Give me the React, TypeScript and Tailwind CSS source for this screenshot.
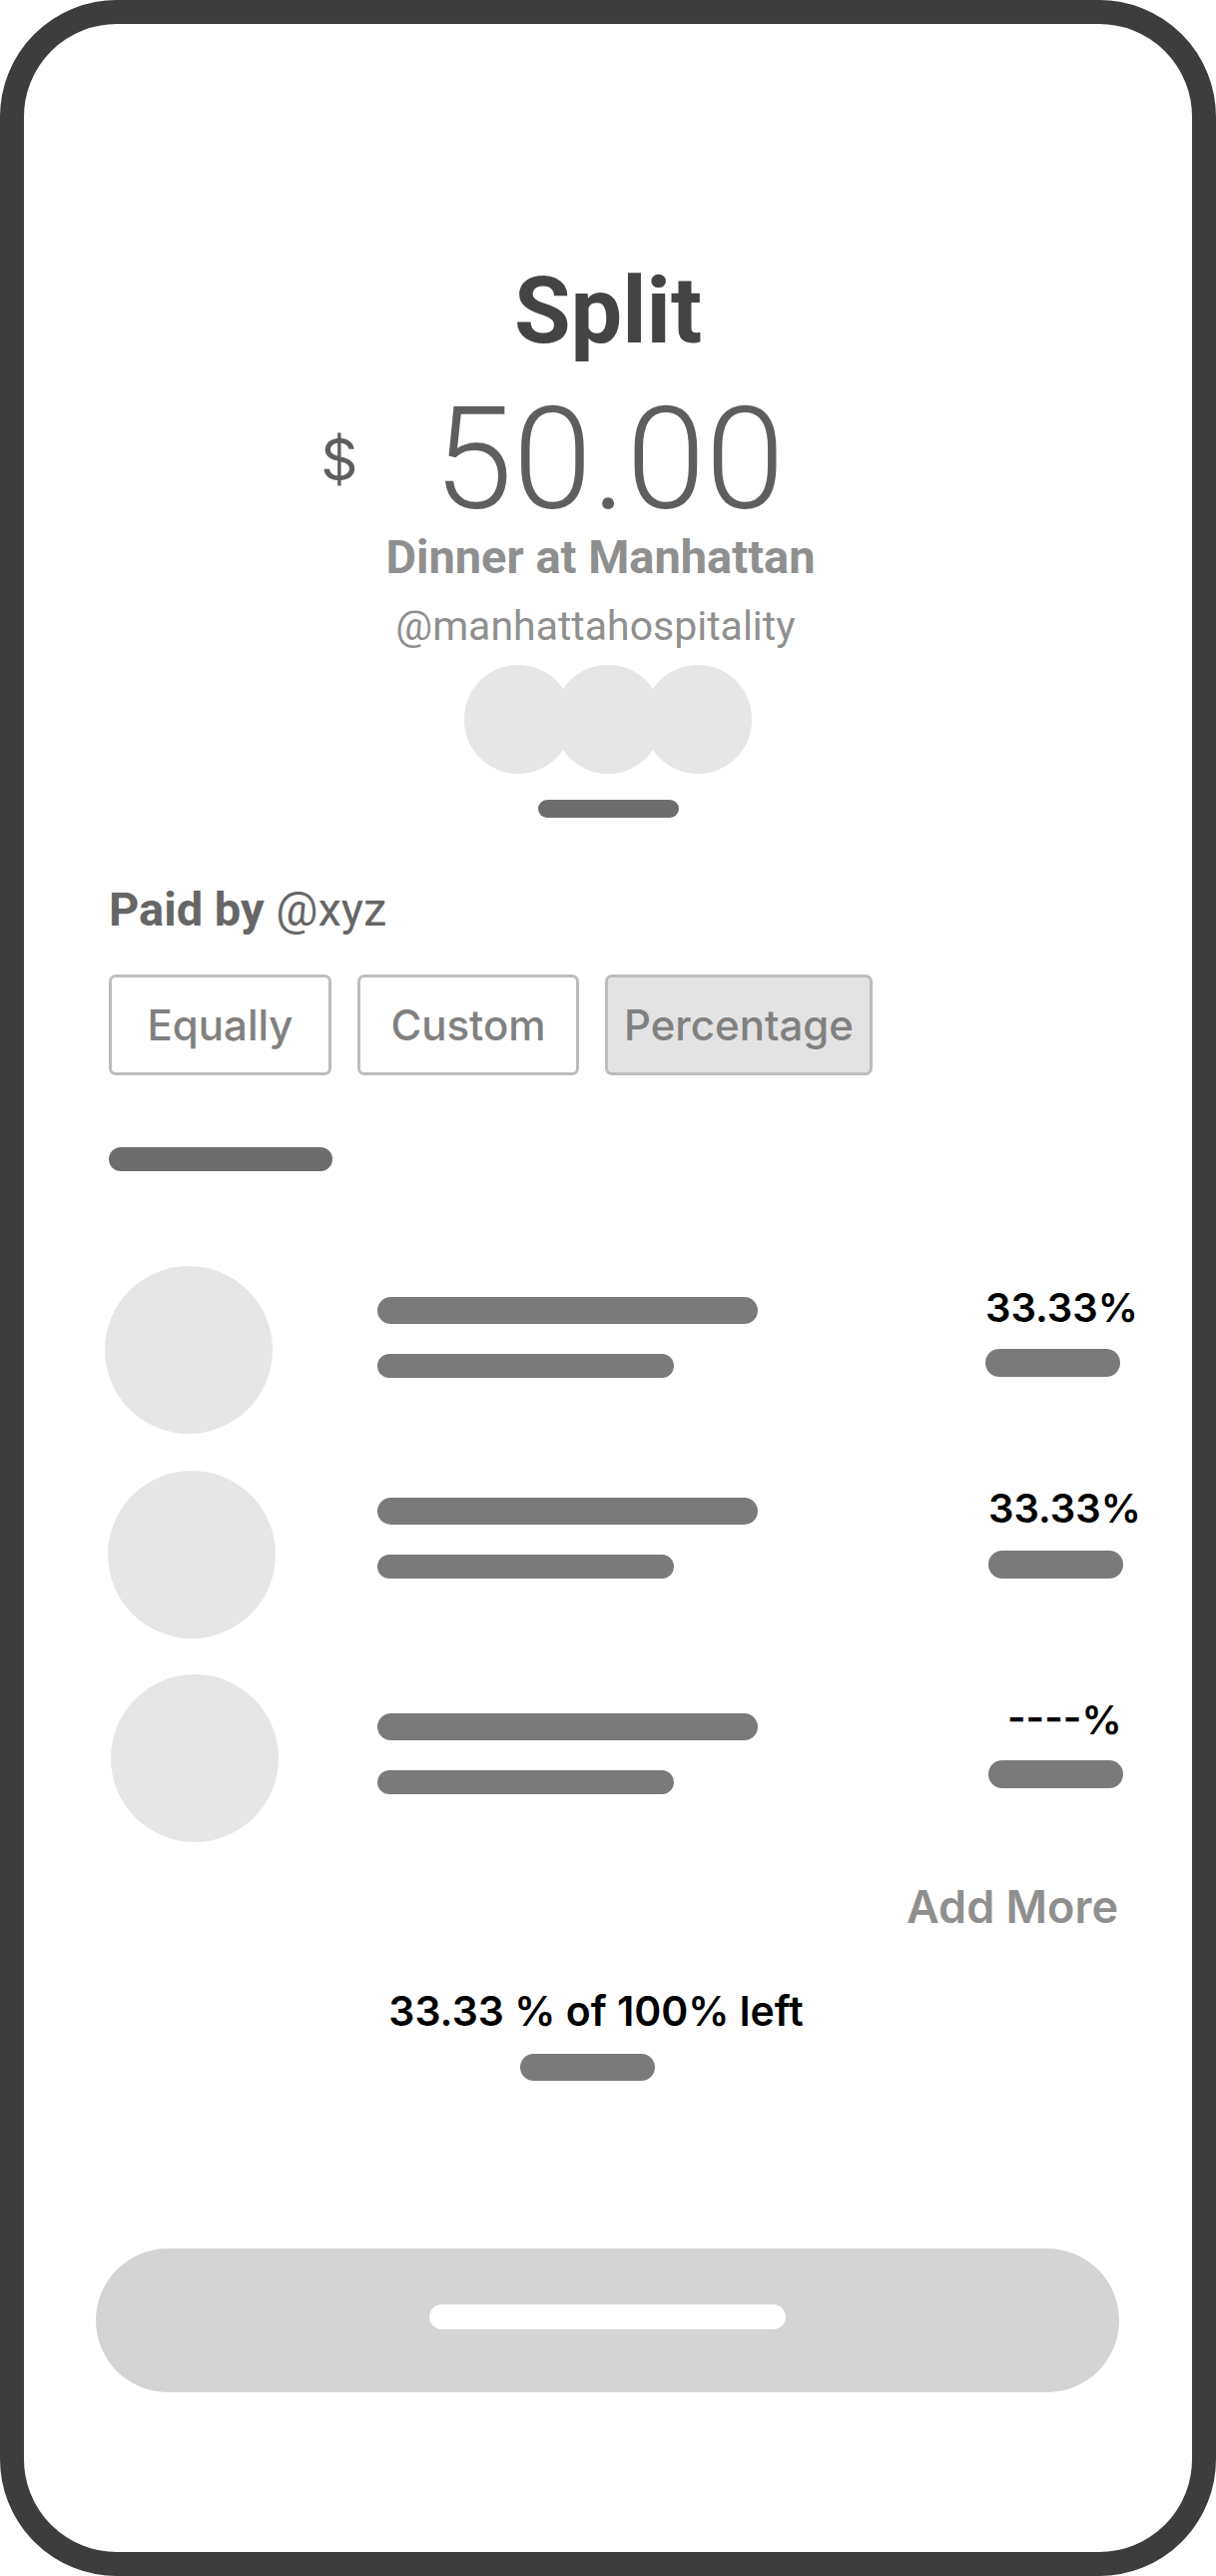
import React from "react";

type RowProps = {
  avOff: string;
  barsPt: string;
  pctPt: string;
  pctMl: string;
  barMt: string;
  text: string;
  textOff: string;
  rowMt: string;
};

function Row({ avOff, barsPt, pctPt, pctMl, barMt, text, textOff, rowMt }: RowProps) {
  return (
    <div className={`flex h-[168px] ${rowMt}`}>
      <div className="w-[269px] shrink-0">
        <div className={`w-[168px] h-[168px] rounded-full bg-[#e6e6e6] ${avOff}`} />
      </div>
      <div className={`w-[609px] shrink-0 flex flex-col ${barsPt}`}>
        <div className="w-[381px] h-[27px] rounded-full bg-[#7a7a7a]" />
        <div className="mt-[30px] w-[297px] h-[24px] rounded-full bg-[#7a7a7a]" />
      </div>
      <div className={`flex flex-col ${pctPt} ${pctMl}`}>
        <span className={`font-['Inter',sans-serif] font-semibold text-[40px] leading-none text-black whitespace-nowrap ${textOff}`}>
          {text}
        </span>
        <div className={`${barMt} w-[135px] h-[28px] rounded-full bg-[#7a7a7a]`} />
      </div>
    </div>
  );
}

export default function App() {
  return (
    <div className="w-[1218px] h-[2580px] bg-white">
      <div className="w-full h-full border-[24px] border-[#3d3d3d] rounded-[117px] bg-white flex flex-col overflow-hidden font-['Roboto',sans-serif]">
        {/* header */}
        <div className="flex flex-col items-center pt-[242px]">
          <h1 className="text-[92px] leading-none font-bold text-[#444444]">Split</h1>
          <div className="mt-[42px] flex items-center">
            <span className="font-['Inter',sans-serif] text-[58px] leading-none text-[#5e5e5e] mr-[76px]">$</span>
            <span className="text-[143px] leading-[120px] font-light text-[#5e5e5e]">50.00</span>
            <span className="w-[111px]" />
          </div>
          <p className="mt-[14px] mr-[15px] text-[47px] leading-none font-bold text-[#8f8f8f]">Dinner at Manhattan</p>
          <p className="mt-[26px] mr-[25px] text-[41px] leading-none text-[#8f8f8f]">@manhattahospitality</p>
          <div className="mt-[18px] flex">
            <div className="w-[108px] h-[109px] rounded-full bg-[#e6e6e6]" />
            <div className="-ml-[18px] w-[108px] h-[109px] rounded-full bg-[#e6e6e6]" />
            <div className="-ml-[18px] w-[108px] h-[109px] rounded-full bg-[#e6e6e6]" />
          </div>
          <div className="mt-[26px] w-[141px] h-[18px] rounded-full bg-[#6d6d6d]" />
        </div>

        {/* body */}
        <div className="flex flex-col pl-[85px] pr-[55px]">
          <p className="mt-[68px] text-[47px] leading-none text-[#666666]">
            <span className="font-bold">Paid by</span> @xyz
          </p>
          <div className="mt-[42px] flex gap-[26px] font-['Inter',sans-serif] font-medium text-[42px] text-[#808080]">
            <div className="w-[223px] h-[101px] border-[3px] border-[#bdbdbd] rounded-[7px] flex items-center justify-center">
              Equally
            </div>
            <div className="w-[222px] h-[101px] border-[3px] border-[#bdbdbd] rounded-[7px] flex items-center justify-center">
              Custom
            </div>
            <div className="w-[268px] h-[101px] border-[3px] border-[#bdbdbd] rounded-[7px] bg-[#e3e3e3] flex items-center justify-center">
              Percentage
            </div>
          </div>
          <div className="mt-[72px] w-[224px] h-[24px] rounded-full bg-[#6d6d6d]" />

          <div className="mt-[95px] flex flex-col">
            <Row avOff="-ml-[4px]" barsPt="pt-[31px]" pctPt="pt-[22px]" pctMl="ml-0" barMt="mt-[21px]" text="33.33%" textOff="" rowMt="" />
            <Row avOff="-ml-[1px]" barsPt="pt-[27px]" pctPt="pt-[18px]" pctMl="ml-[3px]" barMt="mt-[22px]" text="33.33%" textOff="" rowMt="mt-[37px]" />
            <Row avOff="ml-[2px]" barsPt="pt-[39px]" pctPt="pt-[26px]" pctMl="ml-[3px]" barMt="mt-[20px]" text="----%" textOff="ml-[19px]" rowMt="mt-[36px]" />
          </div>

          <p className="mt-[42px] self-end mr-[19px] font-['Inter',sans-serif] font-semibold text-[45px] leading-none text-[#8f8f8f]">
            Add More
          </p>

          <div className="mt-[62px] flex flex-col items-center pr-[54px]">
            <p className="font-['Inter',sans-serif] font-semibold text-[41px] leading-none text-black whitespace-nowrap">
              33.33 % of 100% left
            </p>
            <div className="mt-[22px] mr-[18px] w-[135px] h-[27px] rounded-full bg-[#7a7a7a]" />
          </div>

          <div className="mt-[168px] -ml-[13px] w-[1025px] h-[144px] rounded-full bg-[#d4d4d4] flex items-center justify-center">
            <div className="w-[357px] h-[25px] rounded-full bg-white -mt-[7px]" />
          </div>
        </div>
      </div>
    </div>
  );
}
